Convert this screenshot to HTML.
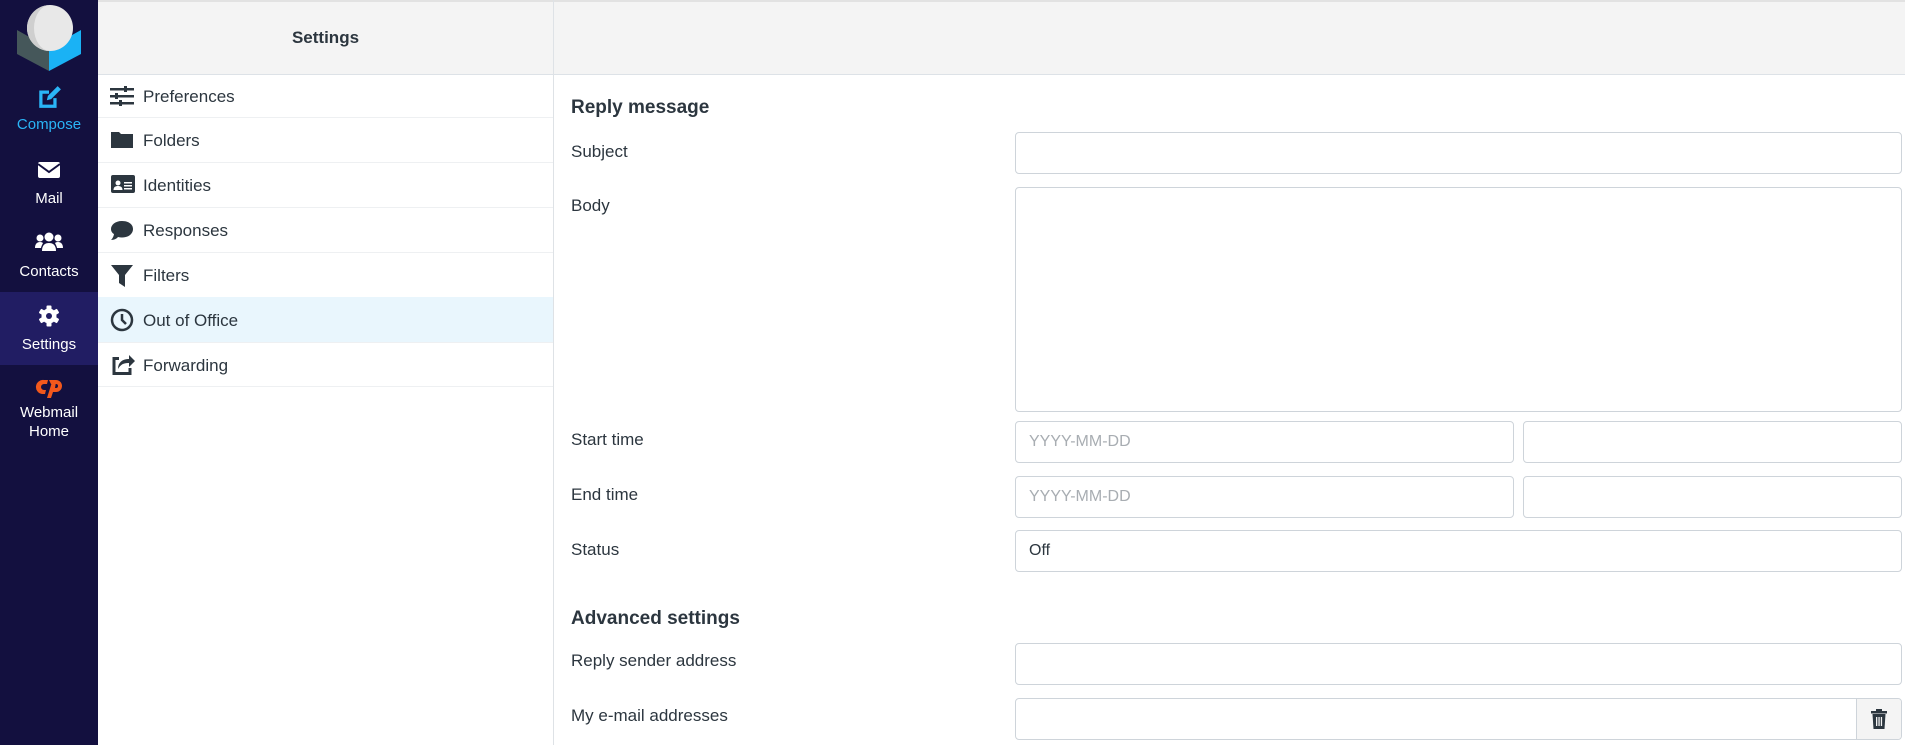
<!DOCTYPE html>
<html><head><meta charset="utf-8"><style>
*{box-sizing:border-box;margin:0;padding:0}
body{width:1905px;height:745px;overflow:hidden;font-family:"Liberation Sans",Arial,sans-serif;color:#2c363f;background:#fff;position:relative}
#side{position:absolute;left:0;top:0;width:98px;height:745px;background:#13103f}
.nav{position:absolute;left:0;width:98px;text-align:center;color:#fff;font-size:15px;line-height:19px}
.nav svg{display:block;margin:0 auto}
#mid{position:absolute;left:98px;top:0;width:456px;height:745px;border-right:1px solid #dee2e6}
.hdr{position:absolute;top:0;height:75px;background:#f4f4f4;border-bottom:1px solid #dde2e7;border-top:2px solid #e2e2e2}
#mid .hdr{left:0;width:455px;text-align:center;font-weight:bold;font-size:17px;line-height:72px}
.row{position:absolute;left:0;width:455px;height:45px;border-bottom:1px solid #eef0f2;font-size:17px;line-height:45px;padding-left:45px}
.row svg{position:absolute;left:12px;top:11px}
.row.act{background:#e9f6fd}
#right{position:absolute;left:554px;top:0;width:1351px;height:745px}
#right .hdr{left:0;width:1351px}
.h{position:absolute;left:17px;font-weight:bold;font-size:19px}
.lbl{position:absolute;left:17px;font-size:17px}
.in{position:absolute;border:1px solid #ced4da;border-radius:4px;background:#fff;font-size:16px;line-height:39px;padding-left:13px}
.ph{color:#a8adb2}
</style></head><body>
<div id="side">
 <svg style="position:absolute;left:14px;top:3px" width="70" height="70" viewBox="0 0 70 70">
  <polygon points="3,27 35,45 35,68 3,51" fill="#45575a"/>
  <polygon points="35,45 67,27 67,51 35,68" fill="#1ab2f5"/>
  <circle cx="36" cy="25" r="23" fill="#e8e8e8"/>
  <path d="M36,2 A23,23 0 0 0 36,48 A16,23 0 0 1 36,2Z" fill="#cfcfcf"/>
 </svg>
 <div class="nav" style="top:85px;color:#2ab5f7"><svg width="26" height="24" viewBox="0 0 24 22"><path d="M3 5h9v3H6v10h10v-6h3v9H3z" fill="#2ab5f7"/><path d="M10 14l1-4 9-9 3 3-9 9z" fill="#2ab5f7"/></svg><div style="margin-top:6px">Compose</div></div>
 <div class="nav" style="top:161px"><svg width="24" height="18" viewBox="0 0 24 18"><rect x="1" y="1" width="22" height="16" rx="2" fill="#fff"/><path d="M1 3l11 8 11-8" stroke="#13103f" stroke-width="2" fill="none"/></svg><div style="margin-top:10px">Mail</div></div>
 <div class="nav" style="top:232px"><svg width="30" height="20" viewBox="0 0 30 20"><circle cx="15" cy="5" r="4.5" fill="#fff"/><circle cx="6" cy="6" r="3.5" fill="#fff"/><circle cx="24" cy="6" r="3.5" fill="#fff"/><path d="M8 19c0-6 3-8 7-8s7 2 7 8z" fill="#fff"/><path d="M1 16c0-4 2-6 5-6 2 0 3 1 3 1-1 2-2 4-2 5z" fill="#fff"/><path d="M29 16c0-4-2-6-5-6-2 0-3 1-3 1 1 2 2 4 2 5z" fill="#fff"/></svg><div style="margin-top:10px">Contacts</div></div>
 <div class="nav" style="top:292px;height:73px;background:#211d63;padding-top:13px"><svg width="22" height="22" viewBox="0 0 22 22"><g fill="#fff"><circle cx="11" cy="11" r="7.5"/><rect x="8.5" y="0.5" width="5" height="21" rx="1"/><rect x="8.5" y="0.5" width="5" height="21" rx="1" transform="rotate(60 11 11)"/><rect x="8.5" y="0.5" width="5" height="21" rx="1" transform="rotate(120 11 11)"/></g><circle cx="11" cy="11" r="3" fill="#211d63"/></svg><div style="margin-top:8px">Settings</div></div>
 <div class="nav" style="top:376px"><svg width="30" height="22" viewBox="0 0 30 22"><path d="M10 4h4l-1 4h-3a3 3 0 0 0 0 6h2l-1 4H8a7 7 0 0 1 2-14z" fill="#f2581c"/><path d="M15 4h7a6 6 0 0 1 0 12h-3l-2 6h-4l5-16 0 0h4l-1 6h1a2 2 0 0 0 0-4h-5z" fill="#f2581c"/></svg><div style="margin-top:5px">Webmail<br>Home</div></div>
</div>
<div id="mid">
 <div class="hdr">Settings</div>
 <div class="row" style="top:75px;height:43px;line-height:43px"><svg width="24" height="20" viewBox="0 0 24 20"><g fill="#2c363f"><rect x="0" y="2" width="24" height="2.5"/><rect x="0" y="9" width="24" height="2.5"/><rect x="0" y="16" width="24" height="2.5"/><rect x="14" y="0" width="3" height="6"/><rect x="5" y="7" width="3" height="6"/><rect x="9" y="14" width="3" height="6"/></g></svg>Preferences</div>
 <div class="row" style="top:118px"><svg width="24" height="20" viewBox="0 0 24 20"><path d="M1 3h8l2 2h12v14H1z" fill="#2c363f"/></svg>Folders</div>
 <div class="row" style="top:163px"><svg width="26" height="20" viewBox="0 0 26 20"><rect x="1" y="1" width="24" height="18" rx="2" fill="#2c363f"/><circle cx="8" cy="9" r="2.5" fill="#fff"/><path d="M3.5 16c0-3 2-4 4.5-4s4.5 1 4.5 4z" fill="#fff"/><rect x="14" y="8" width="8" height="1.5" fill="#fff"/><rect x="14" y="11" width="8" height="1.5" fill="#fff"/><rect x="14" y="14" width="8" height="1.5" fill="#fff"/></svg>Identities</div>
 <div class="row" style="top:208px"><svg width="24" height="22" viewBox="0 0 24 22"><path d="M12 2C5 2 1 6 1 10c0 2 1 4 3 5-0.5 3-2 5-3 6 3 0 6-1.5 7-3 1.3.3 2.6.5 4 .5 7 0 11-4 11-8.5S19 2 12 2z" fill="#2c363f"/></svg>Responses</div>
 <div class="row" style="top:253px"><svg width="24" height="24" viewBox="0 0 24 24"><path d="M1 1h22l-8 10v12l-6-4v-8z" fill="#2c363f"/></svg>Filters</div>
 <div class="row act" style="top:297px;height:46px;line-height:48px"><svg width="24" height="24" viewBox="0 0 24 24"><circle cx="12" cy="12" r="10" stroke="#2c363f" stroke-width="2.5" fill="none"/><path d="M12 6v6l4 4" stroke="#2c363f" stroke-width="2.5" fill="none"/></svg>Out of Office</div>
 <div class="row" style="top:343px;height:44px"><svg style="top:9px" width="26" height="24" viewBox="0 0 26 24"><path d="M3 5h6v3H5.5v12h13v-4h3v7H2.5V5z" fill="#2c363f"/><path d="M8 17c0-7 5-10 11-10V3l6 6-6 6v-4c-5 0-8 1-11 6z" fill="#2c363f"/></svg>Forwarding</div>
</div>
<div id="right">
 <div class="hdr"></div>
 <div class="h" style="top:97px">Reply message</div>
 <div class="lbl" style="top:142px">Subject</div>
 <div class="in" style="left:461px;top:132px;width:887px;height:42px"></div>
 <div class="lbl" style="top:196px">Body</div>
 <div class="in" style="left:461px;top:187px;width:887px;height:225px"></div>
 <div class="lbl" style="top:430px">Start time</div>
 <div class="in ph" style="left:461px;top:421px;width:499px;height:42px">YYYY-MM-DD</div>
 <div class="in" style="left:969px;top:421px;width:379px;height:42px"></div>
 <div class="lbl" style="top:485px">End time</div>
 <div class="in ph" style="left:461px;top:476px;width:499px;height:42px">YYYY-MM-DD</div>
 <div class="in" style="left:969px;top:476px;width:379px;height:42px"></div>
 <div class="lbl" style="top:540px">Status</div>
 <div class="in" style="left:461px;top:530px;width:887px;height:42px">Off</div>
 <div class="h" style="top:608px">Advanced settings</div>
 <div class="lbl" style="top:651px">Reply sender address</div>
 <div class="in" style="left:461px;top:643px;width:887px;height:42px"></div>
 <div class="lbl" style="top:706px">My e-mail addresses</div>
 <div class="in" style="left:461px;top:698px;width:887px;height:42px;overflow:hidden"><div style="position:absolute;right:0;top:0;width:45px;height:42px;background:#f4f4f4;border-left:1px solid #ced4da"><svg style="position:absolute;left:14px;top:10px" width="16" height="20" viewBox="0 0 16 20"><rect x="0" y="2" width="16" height="2.5" fill="#2c363f"/><rect x="5" y="0" width="6" height="3" fill="#2c363f"/><path d="M1.5 5h13l-1 15h-11z" fill="#2c363f"/><rect x="5" y="8" width="1.3" height="9" fill="#f4f4f4"/><rect x="7.4" y="8" width="1.3" height="9" fill="#f4f4f4"/><rect x="9.8" y="8" width="1.3" height="9" fill="#f4f4f4"/></svg></div></div>
</div>
</body></html>
